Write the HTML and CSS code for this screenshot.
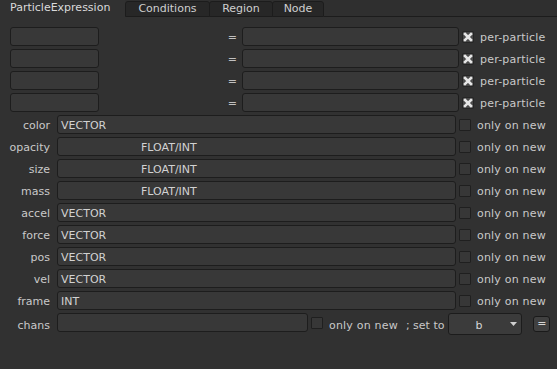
FILE: index.html
```html
<!DOCTYPE html>
<html>
<head>
<meta charset="utf-8">
<link rel="stylesheet" href="styles.css">
</head>
<body>
<div class="panel">
  <div class="tabs">
    <div class="tab active">ParticleExpression</div>
    <div class="tab t-cond">Conditions</div>
    <div class="tab t-region">Region</div>
    <div class="tab t-node">Node</div>
    <div class="tab-rest"></div>
  </div>
  <div class="rows">
    <div class="row">
      <div class="field small"></div><div class="eq txt">=</div><div class="field expr"></div>
      <div class="check x"><svg viewBox="0 0 12 12" width="12" height="12"><path d="M3 3 L9 9 M9 3 L3 9" stroke="#e6e6e6" stroke-width="2.6" stroke-linecap="square"/></svg></div>
      <div class="opt txt">per-particle</div>
    </div>
    <div class="row">
      <div class="field small"></div><div class="eq txt">=</div><div class="field expr"></div>
      <div class="check x"><svg viewBox="0 0 12 12" width="12" height="12"><path d="M3 3 L9 9 M9 3 L3 9" stroke="#e6e6e6" stroke-width="2.6" stroke-linecap="square"/></svg></div>
      <div class="opt txt">per-particle</div>
    </div>
    <div class="row">
      <div class="field small"></div><div class="eq txt">=</div><div class="field expr"></div>
      <div class="check x"><svg viewBox="0 0 12 12" width="12" height="12"><path d="M3 3 L9 9 M9 3 L3 9" stroke="#e6e6e6" stroke-width="2.6" stroke-linecap="square"/></svg></div>
      <div class="opt txt">per-particle</div>
    </div>
    <div class="row">
      <div class="field small"></div><div class="eq txt">=</div><div class="field expr"></div>
      <div class="check x"><svg viewBox="0 0 12 12" width="12" height="12"><path d="M3 3 L9 9 M9 3 L3 9" stroke="#e6e6e6" stroke-width="2.6" stroke-linecap="square"/></svg></div>
      <div class="opt txt">per-particle</div>
    </div>

    <div class="row"><div class="label txt">color</div><div class="field wide">VECTOR</div><div class="check"></div><div class="opt txt">only on new</div></div>
    <div class="row"><div class="label txt">opacity</div><div class="field wide num">FLOAT/INT</div><div class="check"></div><div class="opt txt">only on new</div></div>
    <div class="row"><div class="label txt">size</div><div class="field wide num">FLOAT/INT</div><div class="check"></div><div class="opt txt">only on new</div></div>
    <div class="row"><div class="label txt">mass</div><div class="field wide num">FLOAT/INT</div><div class="check"></div><div class="opt txt">only on new</div></div>
    <div class="row"><div class="label txt">accel</div><div class="field wide">VECTOR</div><div class="check"></div><div class="opt txt">only on new</div></div>
    <div class="row"><div class="label txt">force</div><div class="field wide">VECTOR</div><div class="check"></div><div class="opt txt">only on new</div></div>
    <div class="row"><div class="label txt">pos</div><div class="field wide">VECTOR</div><div class="check"></div><div class="opt txt">only on new</div></div>
    <div class="row"><div class="label txt">vel</div><div class="field wide">VECTOR</div><div class="check"></div><div class="opt txt">only on new</div></div>
    <div class="row"><div class="label txt">frame</div><div class="field wide">INT</div><div class="check"></div><div class="opt txt">only on new</div></div>
    <div class="row chans">
      <div class="label ctxt">chans</div><div class="field chfield"></div><div class="check ch"></div><div class="opt ctxt ch-opt">only on new</div>
      <div class="setto ctxt">; set to</div>
      <div class="dropdown"><span class="dd-val">b</span><svg class="dd-arrow" width="7" height="4" viewBox="0 0 7 4"><path d="M0 0 H7 L3.5 4 Z" fill="#d0d0d0"/></svg></div>
      <div class="btn-eq">=</div>
    </div>
  </div>
</div>
</body>
</html>
```
FILE: styles.css
```css
html, body {
  margin: 0;
  padding: 0;
  background: #313131;
}
body {
  width: 557px;
  height: 369px;
  overflow: hidden;
  font-family: "DejaVu Sans", "Liberation Sans", sans-serif;
  font-size: 11px;
  color: #c9c9c9;
}
.panel {
  width: 557px;
  height: 369px;
  background: #313131;
}
.tabs {
  display: flex;
  height: 17px;
  background: #2f2f2f;
}
.tab {
  box-sizing: border-box;
  height: 17px;
  line-height: 15px;
  text-align: center;
  color: #cfcfcf;
}
.tab.active {
  width: 125px;
  text-align: left;
  padding-left: 10px;
  line-height: 16px;
  color: #dadada;
  background: #313131;
}
.tab:not(.active) {
  margin-top: 1px;
  height: 16px;
  background: #272727;
  border: 1px solid #1c1c1c;
  border-radius: 3px 3px 0 0;
  line-height: 14px;
}
.t-cond { width: 85px; }
.t-region { width: 64px; margin-left: -1px; }
.t-node { width: 52px; margin-left: -1px; }
.tab-rest {
  flex: 1;
  height: 17px;
  box-sizing: border-box;
  border-bottom: 1px solid #1c1c1c;
}
.rows {
  display: flex;
  flex-direction: column;
  gap: 3px;
  padding-top: 10px;
}
.row {
  display: flex;
  align-items: center;
  height: 19px;
}
.txt {
  box-sizing: border-box;
  height: 19px;
  padding-top: 3px;
  line-height: 16px;
}
.ctxt {
  box-sizing: border-box;
  height: 22px;
  padding-top: 5px;
  line-height: 16px;
}
.field {
  box-sizing: border-box;
  height: 19px;
  background: #383838;
  border: 1px solid #1d1d1d;
  border-radius: 3px;
  color: #d2d2d2;
  padding-top: 2px;
  line-height: 15px;
  padding-left: 3px;
  white-space: nowrap;
}
.field.small {
  margin-left: 10px;
  width: 89px;
}
.eq {
  width: 143px;
  text-align: right;
  padding-right: 5px;
  color: #c0c0c0;
}
.field.expr {
  width: 217px;
}
.check {
  box-sizing: border-box;
  width: 12px;
  height: 12px;
  margin-left: 3px;
  background: #373737;
  border: 1px solid #1f1f1f;
  border-radius: 1px;
}
.check.x {
  background: #4a4a4a;
  border-color: #262626;
  position: relative;
}
.check.x svg {
  position: absolute;
  left: -1px;
  top: -1px;
}
.opt {
  margin-left: 6px;
  white-space: nowrap;
  color: #c9c9c9;
  letter-spacing: 0.2px;
}
.label {
  width: 50px;
  text-align: right;
  margin-right: 7px;
  color: #c9c9c9;
}
.field.wide {
  width: 399px;
}
.field.num {
  padding-left: 83px;
}
.row.chans {
  align-items: flex-start;
  height: 22px;
}
.field.chfield {
  width: 251px;
}
.check.ch {
  margin-top: 4px;
}
.setto {
  margin-left: 8px;
  white-space: nowrap;
  color: #c9c9c9;
}
.dropdown {
  box-sizing: border-box;
  width: 74px;
  height: 22px;
  margin-left: 4px;
  background: #3b3b3b;
  border: 1px solid #1c1c1c;
  border-radius: 3px;
  padding-top: 4px;
  line-height: 15px;
  position: relative;
  color: #d6d6d6;
}
.dd-val {
  padding-left: 26px;
}
.dd-arrow {
  position: absolute;
  right: 4px;
  top: 8px;
}
.btn-eq {
  box-sizing: border-box;
  width: 17px;
  height: 16px;
  margin-left: 11px;
  margin-top: 3px;
  background: #404040;
  border: 1px solid #1a1a1a;
  border-radius: 3px;
  text-align: center;
  line-height: 13px;
  color: #d6d6d6;
}
```
